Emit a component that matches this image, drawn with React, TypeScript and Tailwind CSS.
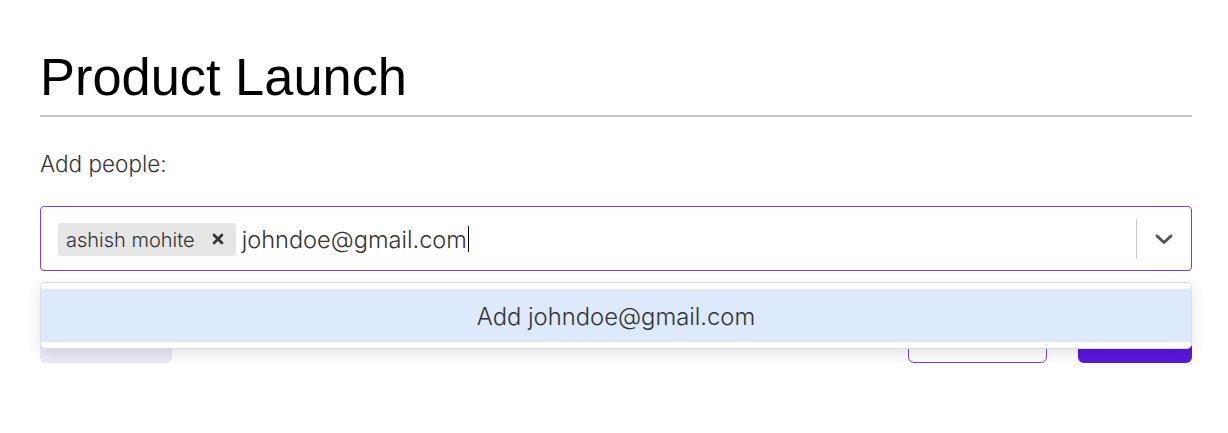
import React from 'react';

const App: React.FC = () => {
  return (
    <div className="min-h-screen bg-white pl-10 pr-[36px] pt-[46px] font-['Inter',sans-serif]">
      <h1 className="font-['Liberation_Sans',Arial,sans-serif] text-[52.4px] leading-[62px] text-black">Product Launch</h1>
      <div className="mt-[7px] h-[2px] bg-[#c8c8c8]" />

      <p className="mt-[33px] text-[22.5px] font-light leading-7 text-[#333]">Add people:</p>

      <div className="relative mt-[28px]">
        <div className="flex h-[65px] items-center rounded border border-[#7c3aed] bg-white pl-[17px]">
          <div className="flex flex-1 items-center gap-[6px] pt-[2px]">
            <span className="flex h-[33px] items-center gap-[17px] rounded-[3px] bg-[#e6e6e6] pl-2 pr-3 text-[20px] font-light text-[#333]">
              <span className="pt-[2px]">ashish mohite</span>
              <svg width="12" height="12" viewBox="0 0 12 12" className="text-[#333]">
                <path d="M2 2 L10 10 M10 2 L2 10" stroke="currentColor" strokeWidth="2.6" strokeLinecap="round" />
              </svg>
            </span>
            <span className="flex items-center text-[23.6px] font-light text-[#333]">
              johndoe@gmail.com
              <span className="ml-[1px] inline-block h-[26px] w-px bg-black" />
            </span>
          </div>
          <div className="h-10 w-px bg-[#ccc]" />
          <div className="flex w-[54px] justify-center text-[#555]">
            <svg width="22" height="22" viewBox="0 0 22 22">
              <path d="M4 8 L11 14.5 L18 8" fill="none" stroke="currentColor" strokeWidth="3" strokeLinecap="round" strokeLinejoin="round" />
            </svg>
          </div>
        </div>

        <div className="mt-[46px] flex justify-between">
          <div className="h-[46px] w-[132px] rounded-md bg-[#ebe8f8]" />
          <div className="flex gap-[31px]">
            <div className="h-[46px] w-[139px] rounded-md border border-[#7c3aed] bg-white" />
            <div className="h-[46px] w-[114px] rounded-md bg-[#5b16de]" />
          </div>
        </div>

        <div className="absolute left-0 right-0 top-[76px] rounded-[5px] border border-[#ddd] bg-white py-[6px] shadow-[0_4px_14px_rgba(0,0,0,0.12)]">
          <div className="flex h-[53px] items-center justify-center bg-[#dde9fc] pt-[3px] text-[23.8px] font-light text-[#333]">
            Add johndoe@gmail.com
          </div>
        </div>
      </div>
    </div>
  );
};

export default App;
